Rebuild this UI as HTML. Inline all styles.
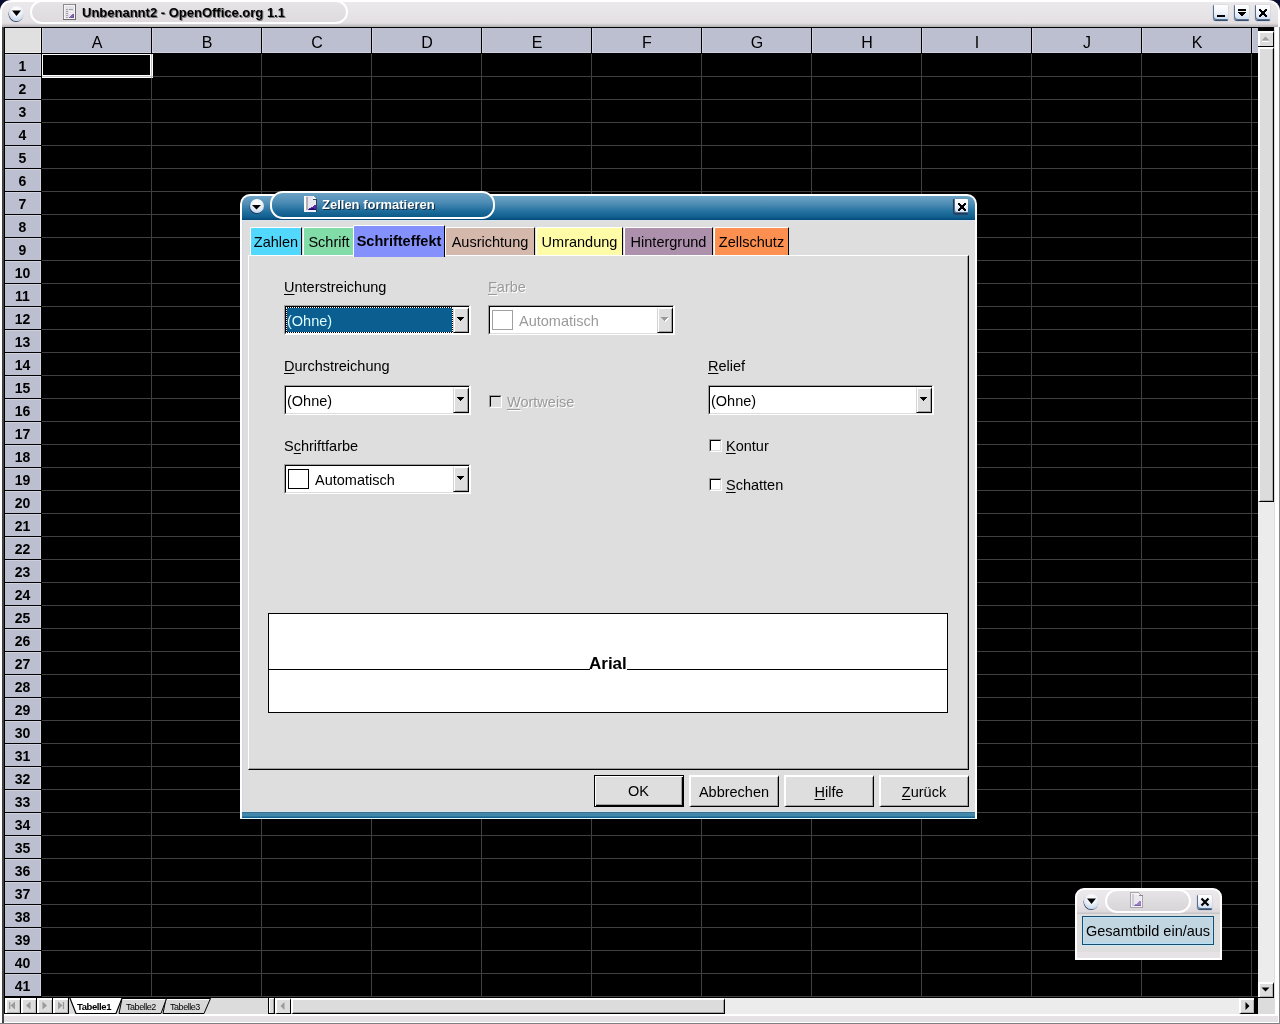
<!DOCTYPE html>
<html><head><meta charset="utf-8">
<style>
*{box-sizing:border-box;margin:0;padding:0}
html,body{width:1280px;height:1024px;overflow:hidden;background:#0c0c30;font-family:"Liberation Sans",sans-serif}
.a{position:absolute}
#win{left:0;top:0;width:1280px;height:1024px;background:#fff;border-radius:11px 11px 0 0;overflow:hidden}
#tb{left:2px;top:2px;width:1276px;height:25px;border-radius:9px 9px 0 0;background:linear-gradient(#ebe9eb 0,#e4e0e4 20px,#dcd8dc 22px,#b8b6b8 24px)}
#grid{left:4px;top:27px;width:1270px;height:971px;background:#000}
.ch{top:28px;height:25px;background:#bcbfd0;border-left:1px solid #d0d0de;border-bottom:1px solid #cfcfdd;font-size:16px;text-align:center;line-height:30px;color:#000}
.rh{left:5px;width:36px;height:22px;background:#bcbfd0;border-top:1px solid #d0d0de;border-right:1px solid #cfcfdd;font-size:14px;font-weight:bold;text-align:center;line-height:22px;color:#000}
#cells{left:42px;top:54px;width:1216px;height:943px;background:
repeating-linear-gradient(to right,transparent 0,transparent 109px,#404040 109px,#404040 110px),
repeating-linear-gradient(to bottom,transparent 0,transparent 22px,#404040 22px,#404040 23px),#000}
.wb{top:5px;width:15px;height:15px;background:linear-gradient(#ffffff,#f2f5fb 45%,#cddcf0);border-radius:1px 1px 1px 3px;box-shadow:inset 1px -1px 0 #56708f,0 0.5px 0.8px #2c4468}
.wb svg{position:absolute;left:0;top:0}
.dlg{left:240px;top:194px;width:737px;height:625px;background:#fff;border-radius:10px 10px 0 0}
.tab{top:227px;height:28px;border-top:1px solid #fff;border-left:1px solid #fff;border-right:1px solid #000;font-size:14.5px;text-align:center;line-height:28px;color:#000;white-space:nowrap;border-radius:2px 1px 0 0}
.lbl{font-size:14.5px;color:#000;white-space:nowrap;line-height:17px}
.u{text-decoration:underline;text-decoration-thickness:1px;text-underline-offset:2px}
.cb{width:187px;height:30px;border-top:1px solid #a0a0a0;border-left:1px solid #a0a0a0;border-right:2px solid #fff;border-bottom:1px solid #fff}
.cbi{position:absolute;left:0;top:0;right:0;bottom:0;border-top:1px solid #000;border-left:1px solid #000;border-bottom:1px solid #dcdcdc;background:#fff}
.ddb{position:absolute;right:0;top:0;width:16px;height:26px;background:#dedede;border-top:2px solid #fff;border-left:1px solid #d4d4d4;border-right:1px solid #000;border-bottom:1px solid #000;box-shadow:inset 1px 0 0 #fff,inset -1px -1px 0 #a0a0a0}
.ddb svg{position:absolute;left:3px;top:8px}
.chk{width:13px;height:13px;border-top:1px solid #a0a0a0;border-left:1px solid #a0a0a0;border-right:1px solid #fff;border-bottom:1px solid #fff}
.chk i{position:absolute;left:0;top:0;width:11px;height:11px;border-top:1px solid #000;border-left:1px solid #000;border-right:1px solid #dedede;border-bottom:1px solid #dedede;background:#fff}
.chk.d i{background:#dedede}
.btn{top:775px;width:90px;height:32px;background:#dedede;border-top:2px solid #fff;border-left:2px solid #fff;border-right:1px solid #000;border-bottom:1px solid #000;box-shadow:inset -1px -1px 0 #a0a0a0;font-size:14.5px;text-align:center;line-height:30px;padding-right:1px;color:#000}
.dis{color:#9a9a9a;text-shadow:1px 1px 0 #fff}
.nb{top:998px;width:15px;height:15px;background:#dcdcdc;border-top:2px solid #fff;border-left:2px solid #fff;box-shadow:inset -1px -1px 0 #b8b8b8}
.nb svg{position:absolute;left:-2px;top:-2px}
</style></head><body>
<div id="root" class="a" style="left:0;top:0;width:1280px;height:1024px;will-change:transform;overflow:hidden">
<div id="win" class="a">
<div id="tb" class="a"></div>
<div id="grid" class="a"></div>
<div class="a" style="left:5px;top:28px;width:36px;height:25px;background:#e0e0e0;border-right:1px solid #f0f0f0;border-bottom:1px solid #f0f0f0"></div>
<div id="cells" class="a"></div>
<div class="a ch" style="left:42px;width:109px">A</div>
<div class="a ch" style="left:152px;width:109px">B</div>
<div class="a ch" style="left:262px;width:109px">C</div>
<div class="a ch" style="left:372px;width:109px">D</div>
<div class="a ch" style="left:482px;width:109px">E</div>
<div class="a ch" style="left:592px;width:109px">F</div>
<div class="a ch" style="left:702px;width:109px">G</div>
<div class="a ch" style="left:812px;width:109px">H</div>
<div class="a ch" style="left:922px;width:109px">I</div>
<div class="a ch" style="left:1032px;width:109px">J</div>
<div class="a ch" style="left:1142px;width:109px">K</div>
<div class="a" style="left:1251px;top:28px;width:1px;height:25px;background:#000"></div>
<div class="a ch" style="left:1252px;width:6px"></div>
<div class="a rh" style="top:54px">1</div>
<div class="a rh" style="top:77px">2</div>
<div class="a rh" style="top:100px">3</div>
<div class="a rh" style="top:123px">4</div>
<div class="a rh" style="top:146px">5</div>
<div class="a rh" style="top:169px">6</div>
<div class="a rh" style="top:192px">7</div>
<div class="a rh" style="top:215px">8</div>
<div class="a rh" style="top:238px">9</div>
<div class="a rh" style="top:261px">10</div>
<div class="a rh" style="top:284px">11</div>
<div class="a rh" style="top:307px">12</div>
<div class="a rh" style="top:330px">13</div>
<div class="a rh" style="top:353px">14</div>
<div class="a rh" style="top:376px">15</div>
<div class="a rh" style="top:399px">16</div>
<div class="a rh" style="top:422px">17</div>
<div class="a rh" style="top:445px">18</div>
<div class="a rh" style="top:468px">19</div>
<div class="a rh" style="top:491px">20</div>
<div class="a rh" style="top:514px">21</div>
<div class="a rh" style="top:537px">22</div>
<div class="a rh" style="top:560px">23</div>
<div class="a rh" style="top:583px">24</div>
<div class="a rh" style="top:606px">25</div>
<div class="a rh" style="top:629px">26</div>
<div class="a rh" style="top:652px">27</div>
<div class="a rh" style="top:675px">28</div>
<div class="a rh" style="top:698px">29</div>
<div class="a rh" style="top:721px">30</div>
<div class="a rh" style="top:744px">31</div>
<div class="a rh" style="top:767px">32</div>
<div class="a rh" style="top:790px">33</div>
<div class="a rh" style="top:813px">34</div>
<div class="a rh" style="top:836px">35</div>
<div class="a rh" style="top:859px">36</div>
<div class="a rh" style="top:882px">37</div>
<div class="a rh" style="top:905px">38</div>
<div class="a rh" style="top:928px">39</div>
<div class="a rh" style="top:951px">40</div>
<div class="a rh" style="top:974px">41</div>
<!-- cursor -->
<div class="a" style="left:42px;top:54px;width:111px;height:24px;border:1px solid #fff;border-right-width:3px;border-bottom-width:3px"></div>
<div class="a" style="left:151px;top:54px;width:1px;height:24px;background:#c0c0c0"></div>
<div class="a" style="left:42px;top:76px;width:111px;height:1px;background:#c0c0c0"></div>

<!-- title bar -->
<div class="a" style="left:9px;top:6px;width:15px;height:15px;border-radius:50%;background:radial-gradient(circle at 50% 30%,#fff 0,#f4f6fa 35%,#c8d8ec 80%,#5a7090 100%);box-shadow:-0.5px 1px 0.5px #34506e"></div>
<svg class="a" style="left:9px;top:6px" width="15" height="15"><path d="M3 4.5 H12 L7.5 10Z" fill="#000"/></svg>
<div class="a" style="left:30px;top:0px;width:318px;height:24px;border:2px solid #fff;border-radius:12px;background:linear-gradient(#e6e4e6,#dedade)"></div>
<svg class="a" style="left:63px;top:4px" width="13" height="16" shape-rendering="crispEdges"><rect x="0" y="0" width="13" height="16" fill="#8c8c8c"/><rect x="12" y="0" width="1" height="16" fill="#6c6c6c"/><rect x="0" y="15" width="13" height="1" fill="#6c6c6c"/><rect x="1" y="1" width="11" height="14" fill="#f6f4f8"/><rect x="2" y="2" width="9" height="12" fill="#e4e2e6"/><path d="M3 5h2v1h-2zM3 7h2v1h-2zM3 9h2v1h-2zM3 11h2v1h-2zM3 13h2v1h-2zM6 5h4v1h-4z" fill="#a4a4a8"/><path d="M6 7h4v1h-4zM6 9h4v1h-4z" fill="#fbf4fa"/><path d="M9 10h2v4h-5v-1h1v-1h1v-1h1z" fill="#8a62b8"/><path d="M10 10h1v4h-3v-1h2z" fill="#6a5a9a"/></svg>
<div class="a" style="left:83px;top:6px;font-size:13px;font-weight:bold;color:#7a7a7a;line-height:16px;white-space:nowrap">Unbenannt2 - OpenOffice.org 1.1</div>
<div class="a" style="left:82px;top:5px;font-size:13px;font-weight:bold;color:#000;line-height:16px;white-space:nowrap">Unbenannt2 - OpenOffice.org 1.1</div>
<div class="a wb" style="left:1213px"><svg width="15" height="15" shape-rendering="crispEdges"><rect x="4" y="10" width="8" height="2" fill="#000"/></svg></div>
<div class="a wb" style="left:1234px"><svg width="15" height="15" shape-rendering="crispEdges"><path d="M4 4H12V6H4Z M4 7H12V8H11V9H10V10H9V11H7V10H6V9H5V8H4Z" fill="#000"/></svg></div>
<div class="a wb" style="left:1255px"><svg width="15" height="15" shape-rendering="crispEdges"><path d="M4 4H6V5H7V6H9V5H10V4H12V6H11V7H10V9H11V10H12V12H10V11H9V10H7V11H6V12H4V10H5V9H6V7H5V6H4Z" fill="#000"/></svg></div>
<!-- frame -->
<div class="a" style="left:2px;top:27px;width:2px;height:997px;background:#424242"></div>
<div class="a" style="left:1279px;top:27px;width:1px;height:997px;background:#888"></div>
<div class="a" style="left:1274px;top:27px;width:1px;height:987px;background:#dedede"></div>
<div class="a" style="left:0;top:1023px;width:1280px;height:1px;background:#808080"></div>
<div class="a" style="left:1258px;top:27px;width:16px;height:4px;background:#000"></div>
<!-- vscroll -->
<div class="a" style="left:1258px;top:31px;width:16px;height:15px;background:#dcdcdc;border-top:2px solid #fff;border-left:2px solid #fff;border-right:1px solid #000"></div>
<svg class="a" style="left:1258px;top:31px" width="15" height="15"><path d="M3.5 9.5 L7.5 5.5 L11.5 9.5Z" fill="#a0a0a0"/><path d="M4 10.5 H11" stroke="#fff" stroke-width="1"/></svg>
<div class="a" style="left:1258px;top:46px;width:16px;height:1px;background:#000"></div>
<div class="a" style="left:1258px;top:47px;width:16px;height:455px;background:#dcdcdc;border-top:2px solid #fff;border-left:2px solid #fff;border-bottom:1px solid #000;border-right:1px solid #000;box-shadow:inset -1px -1px 0 #b0b0b0"></div>
<div class="a" style="left:1258px;top:502px;width:16px;height:480px;background:#ececec"></div>
<div class="a" style="left:1258px;top:982px;width:16px;height:15px;background:#dcdcdc;border-top:2px solid #fff;border-left:2px solid #fff;border-right:1px solid #000;box-shadow:inset -1px -1px 0 #b0b0b0"></div>
<svg class="a" style="left:1258px;top:982px" width="15" height="15"><path d="M3.5 5.5 L11.5 5.5 L7.5 9.5Z" fill="#000"/></svg>
<div class="a" style="left:1258px;top:997px;width:16px;height:1px;background:#000"></div>
<div class="a" style="left:1258px;top:998px;width:16px;height:16px;background:#dcdcdc"></div>
<!-- bottom tab bar -->
<div class="a" style="left:4px;top:996px;width:38px;height:2px;background:#000"></div>
<div class="a" style="left:42px;top:997px;width:1216px;height:1px;background:#000"></div>
<div class="a" style="left:4px;top:998px;width:1254px;height:16px;background:#dcdcdc"></div>
<div class="a" style="left:4px;top:1013px;width:65px;height:1px;background:#000"></div>
<div class="a" style="left:4px;top:1014px;width:1274px;height:9px;background:linear-gradient(#fff 0,#fff 2px,#e6e2e6 2px,#e4e0e4 8px,#fff 8px)"></div>
<!-- nav buttons -->
<div class="a" style="left:4px;top:998px;width:65px;height:16px;background:#000"></div>
<div class="a nb" style="left:5px"><svg width="15" height="15"><rect x="4" y="4" width="1.3" height="7" fill="#9a9a9a"/><path d="M5.5 7.5L10 3.5V11.5Z" fill="#9a9a9a"/></svg></div>
<div class="a nb" style="left:21px"><svg width="15" height="15"><path d="M5 7.5L9.5 3.5V11.5Z" fill="#9a9a9a"/></svg></div>
<div class="a nb" style="left:37px"><svg width="15" height="15"><path d="M10 7.5L5.5 3.5V11.5Z" fill="#9a9a9a"/></svg></div>
<div class="a nb" style="left:53px"><svg width="15" height="15"><path d="M9.5 7.5L5 3.5V11.5Z" fill="#9a9a9a"/><rect x="9.8" y="4" width="1.3" height="7" fill="#9a9a9a"/></svg></div>
<svg class="a" style="left:69px;top:998px" width="200" height="16">
<path d="M97 0.5H141.5L135 15.5H94Z" fill="#d8d8d8" stroke="#000" stroke-width="1"/>
<path d="M97.5 1.5H140" stroke="#fff"/>
<path d="M53 0.5H97.5L92 15.5H50Z" fill="#d8d8d8" stroke="#000" stroke-width="1"/>
<path d="M53.5 1.5H96" stroke="#fff"/>
<path d="M0.5 -1L7 15.5H47L53.5 -1" fill="#fff" stroke="#000" stroke-width="1.2"/>
</svg>
<div class="a" style="left:77px;top:1000px;font-size:9.5px;font-weight:bold;line-height:13px;white-space:nowrap;letter-spacing:-0.4px">Tabelle1</div>
<div class="a" style="left:126px;top:1001px;font-size:9px;line-height:13px;white-space:nowrap;letter-spacing:-0.45px">Tabelle2</div>
<div class="a" style="left:170px;top:1001px;font-size:9px;line-height:13px;white-space:nowrap;letter-spacing:-0.45px">Tabelle3</div>
<!-- hscroll -->
<div class="a" style="left:268px;top:998px;width:7px;height:16px;background:#dcdcdc;border-left:1px solid #000;border-right:1px solid #000;border-bottom:1px solid #000;box-shadow:inset 1px 1px 0 #fff,inset -1px 0 0 #a0a0a0"></div>
<div class="a" style="left:275px;top:998px;width:16px;height:16px;background:#dcdcdc;border-top:2px solid #fff;border-left:2px solid #fff;border-right:1px solid #000;border-bottom:1px solid #000"></div>
<svg class="a" style="left:275px;top:998px" width="16" height="16"><path d="M5.5 8L9.5 4V12Z" fill="#9a9a9a"/></svg>
<div class="a" style="left:291px;top:998px;width:434px;height:16px;background:#dcdcdc;border-top:2px solid #fff;border-left:2px solid #fff;border-right:1px solid #000;border-bottom:1px solid #000;box-shadow:inset -1px -1px 0 #a0a0a0"></div>
<div class="a" style="left:725px;top:998px;width:515px;height:16px;background:#ececec"></div>
<div class="a" style="left:1239px;top:998px;width:15px;height:16px;background:#dcdcdc;border-top:2px solid #fff;border-left:2px solid #fff;border-bottom:1px solid #000;box-shadow:inset -1px -1px 0 #b0b0b0"></div>
<svg class="a" style="left:1239px;top:998px" width="15" height="16"><path d="M10.5 8L6.5 4V12Z" fill="#000"/></svg>
<div class="a" style="left:1254px;top:997px;width:4px;height:17px;background:#000"></div>
</div>
<!-- dialog -->
<div class="a dlg"></div>
<div class="a" style="left:242px;top:196px;width:733px;height:24px;border-radius:8px 8px 0 0;background:linear-gradient(#6ea4c6 0,#4f8db4 8px,#2a76a4 14px,#0c5c8c 22px,#084a78 23px)"></div>
<div class="a" style="left:242px;top:220px;width:733px;height:591px;background:#dedede;border-top:1px solid #d8e4ee;border-left:1px solid #d0d8e4"></div>
<div class="a" style="left:242px;top:811px;width:733px;height:1px;background:#d4e4ee"></div>
<div class="a" style="left:242px;top:812px;width:733px;height:6px;background:linear-gradient(#3a6e8c 0,#3a6e8c 1px,#4288aa 1px,#4288aa 4px,#2a78a0 4px,#2a78a0 5px,#15608c 5px)"></div>
<div class="a" style="left:240px;top:818px;width:737px;height:1px;background:#e0fcfc"></div>
<div class="a" style="left:270px;top:191px;width:225px;height:28px;border:2px solid #fff;border-radius:13px;background:linear-gradient(#6aa2c4 0,#4a8ab4 10px,#1e6c9c 18px,#0c5a8a 24px)"></div>
<div class="a" style="left:249.5px;top:199px;width:14px;height:14px;border-radius:50%;background:radial-gradient(circle at 50% 30%,#fff 0,#f4f6fa 35%,#c8d8ec 80%,#7a90b0 100%);box-shadow:-0.5px 1px 0.5px #1c3a5a"></div>
<svg class="a" style="left:249px;top:199px" width="15" height="15"><path d="M3 6H12L7.5 10.5Z" fill="#000"/></svg>
<svg class="a" style="left:304px;top:196px" width="14" height="16" shape-rendering="crispEdges"><path d="M0 0h9v1h1v1h1v1h2v13h-13z" fill="#e8e6ee"/><rect x="0" y="0" width="2" height="16" fill="#fafafa"/><rect x="2" y="1" width="2" height="14" fill="#b4b2b8"/><rect x="0" y="14" width="13" height="2" fill="#f2eefa"/><path d="M9 0h1v1h1v1h1v1h-3z" fill="#ffffff"/><rect x="9" y="3" width="4" height="1" fill="#404a56"/><rect x="12" y="3" width="1" height="13" fill="#34404c"/><path d="M10 9h2v5h-8v-1h1v-1h2v-1h2v-1h1z" fill="#5a2aa8"/><path d="M5 13h7v1h-7z" fill="#1c0c68"/><path d="M7 12h3v1h-3z" fill="#200c70"/></svg>
<div class="a" style="left:323px;top:198px;font-size:13px;font-weight:bold;color:#0a2a40;line-height:16px;white-space:nowrap">Zellen formatieren</div>
<div class="a" style="left:322px;top:197px;font-size:13px;font-weight:bold;color:#fff;line-height:16px;white-space:nowrap">Zellen formatieren</div>
<div class="a wb" style="left:953px;top:199px;width:15px;height:15px;border-left:1px solid #1c3a5a;border-bottom:1px solid #1c3a5a"><svg width="15" height="15" shape-rendering="crispEdges"><path d="M4 4H6V5H7V6H9V5H10V4H12V6H11V7H10V9H11V10H12V12H10V11H9V10H7V11H6V12H4V10H5V9H6V7H5V6H4Z" fill="#000"/></svg></div>
<!-- panel -->
<div class="a" style="left:248px;top:255px;width:721px;height:515px;border-top:1px solid #fff;border-left:1px solid #fff;border-right:1px solid #000;border-bottom:1px solid #000;box-shadow:inset -1px -1px 0 #a0a0a0"></div>
<!-- content -->
<div class="a lbl" style="left:284px;top:279px"><span class="u">U</span>nterstreichung</div>
<div class="a cb" style="left:284px;top:305px"><div class="cbi" style="background:#000;border-bottom-color:#fff"><div style="position:absolute;left:0;top:0;width:167px;height:26px;border:1px dotted #fff;background:#0b5f90;background-clip:padding-box"></div><div class="lbl" style="position:absolute;left:1px;top:6px;color:#dcfcff">(Ohne)</div><div class="ddb"><svg width="7" height="4"><path d="M0 0H7V1H6V2H5V3H4V4H3V3H2V2H1V1H0Z" fill="#000"/></svg></div></div></div>
<div class="a lbl dis" style="left:488px;top:279px"><span class="u">F</span>arbe</div>
<div class="a cb" style="left:488px;top:305px"><div class="cbi"><div style="position:absolute;left:2px;top:3px;width:21px;height:20px;border:1px solid #a0a0a0"></div><div class="lbl dis" style="position:absolute;left:29px;top:6px;text-shadow:none">Automatisch</div><div class="ddb" style="border-right-color:#000"><svg width="8" height="5"><path d="M1 1H8V2H7V3H6V4H5V5H4V4H3V3H2V2H1Z" fill="#fff"/><path d="M0 0H7V1H6V2H5V3H4V4H3V3H2V2H1V1H0Z" fill="#9a9a9a"/></svg></div></div></div>
<div class="a lbl" style="left:284px;top:358px"><span class="u">D</span>urchstreichung</div>
<div class="a cb" style="left:284px;top:385px"><div class="cbi"><div class="lbl" style="position:absolute;left:1px;top:6px">(Ohne)</div><div class="ddb"><svg width="7" height="4"><path d="M0 0H7V1H6V2H5V3H4V4H3V3H2V2H1V1H0Z" fill="#000"/></svg></div></div></div>
<div class="a chk d" style="left:489px;top:395px"><i></i></div>
<div class="a lbl dis" style="left:507px;top:394px"><span class="u">W</span>ortweise</div>
<div class="a lbl" style="left:708px;top:358px"><span class="u">R</span>elief</div>
<div class="a cb" style="left:708px;top:385px;width:226px"><div class="cbi"><div class="lbl" style="position:absolute;left:1px;top:6px">(Ohne)</div><div class="ddb"><svg width="7" height="4"><path d="M0 0H7V1H6V2H5V3H4V4H3V3H2V2H1V1H0Z" fill="#000"/></svg></div></div></div>
<div class="a lbl" style="left:284px;top:438px">S<span class="u">c</span>hriftfarbe</div>
<div class="a cb" style="left:284px;top:464px"><div class="cbi"><div style="position:absolute;left:2px;top:3px;width:21px;height:20px;border:1px solid #000"></div><div class="lbl" style="position:absolute;left:29px;top:6px">Automatisch</div><div class="ddb"><svg width="7" height="4"><path d="M0 0H7V1H6V2H5V3H4V4H3V3H2V2H1V1H0Z" fill="#000"/></svg></div></div></div>
<div class="a chk" style="left:709px;top:439px"><i></i></div>
<div class="a lbl" style="left:726px;top:438px"><span class="u">K</span>ontur</div>
<div class="a chk" style="left:709px;top:478px"><i></i></div>
<div class="a lbl" style="left:726px;top:477px"><span class="u">S</span>chatten</div>
<!-- preview -->
<div class="a" style="left:268px;top:613px;width:680px;height:100px;background:#fff;border:1px solid #000"></div>
<div class="a" style="left:269px;top:669px;width:678px;height:1px;background:#000"></div>
<div class="a" style="left:590px;top:652px;width:37px;height:20px;background:#fff"></div>
<div class="a" style="left:589px;top:654px;font-size:17px;font-weight:bold;line-height:20px;white-space:nowrap">Arial</div>
<!-- buttons -->
<div class="a btn" style="left:594px;border:1px solid #000;box-shadow:inset 1px 1px 0 #fff,inset -1px -1px 0 #000,inset -2px -2px 0 #a0a0a0">OK</div>
<div class="a btn" style="left:689px">Abbrechen</div>
<div class="a btn" style="left:784px"><span class="u">H</span>ilfe</div>
<div class="a btn" style="left:879px"><span class="u">Z</span>urück</div>
<!-- tabs -->
<div class="a tab" style="left:250px;width:52px;background:#52d8fc">Zahlen</div>
<div class="a tab" style="left:303px;width:51px;background:#82dca8;border-right:0">Schrift</div>
<div class="a tab" style="left:445px;width:90px;background:#d4b8ac">Ausrichtung</div>
<div class="a tab" style="left:536px;width:87px;background:#fffca8">Umrandung</div>
<div class="a tab" style="left:624px;width:89px;background:#ac90ac">Hintergrund</div>
<div class="a tab" style="left:714px;width:75px;background:#fc9050">Zellschutz</div>
<div class="a tab" style="left:353px;top:225px;width:92px;height:32px;background:#8490fc;font-weight:bold;line-height:30px;border-bottom:0">Schrifteffekt</div>
<!-- navigator -->
<div class="a" style="left:1075px;top:888px;width:147px;height:72px;background:#fff;border-radius:9px 9px 0 0"></div>
<div class="a" style="left:1077px;top:890px;width:143px;height:24px;border-radius:7px 7px 0 0;background:linear-gradient(#eceaec 0,#e6e2e6 16px,#dcd8dc 22px,#c8c6c8 23px)"></div>
<div class="a" style="left:1077px;top:914px;width:143px;height:38px;background:#dedede"></div>
<div class="a" style="left:1077px;top:952px;width:143px;height:6px;background:#e6e2e6"></div>
<div class="a" style="left:1105px;top:889px;width:86px;height:24px;border:2px solid #fff;border-radius:12px;background:linear-gradient(#e6e4e6,#d8d4d8)"></div>
<div class="a" style="left:1084px;top:894px;width:15px;height:15px;border-radius:50%;background:radial-gradient(circle at 50% 30%,#fff 0,#f4f6fa 35%,#c8d8ec 80%,#5a7090 100%);box-shadow:-0.5px 1px 0.5px #34506e"></div>
<svg class="a" style="left:1084px;top:894px" width="15" height="15"><path d="M3 4.5 H12 L7.5 10Z" fill="#000"/></svg>
<svg class="a" style="left:1130px;top:892px" width="13" height="16" shape-rendering="crispEdges"><path d="M0 0h9v1h1v1h1v1h2v13h-13z" fill="#a8a6aa"/><path d="M1 1h8v1h1v1h1v1h1v11h-11z" fill="#f4f0f6"/><rect x="2" y="2" width="2" height="12" fill="#d0ced4"/><rect x="4" y="3" width="7" height="11" fill="#ece8f0"/><rect x="9" y="3" width="4" height="1" fill="#8a888c"/><path d="M9 9h2v5h-7v-1h1v-1h2v-1h1v-1h1z" fill="#9a82c8"/><path d="M5 13h6v1h-6z" fill="#7a62a8"/></svg>
<div class="a wb" style="left:1197px;top:895px;width:15px;height:14px"><svg width="14" height="14"><path d="M4.5 3.5L11.5 10.5M11.5 3.5L4.5 10.5" stroke="#000" stroke-width="2.2"/></svg></div>
<div class="a" style="left:1082px;top:916px;width:132px;height:29px;background:#c2d6e2;border:1px solid #1c4c6a;box-shadow:inset 1px 1px 0 #b4e4fc,inset -1px -1px 0 #b4e4fc,0 1px 0 #c8ecfa"></div>
<div class="a lbl" style="left:1086px;top:923px;font-size:14.5px">Gesamtbild ein/aus</div>
</div>
</body></html>
